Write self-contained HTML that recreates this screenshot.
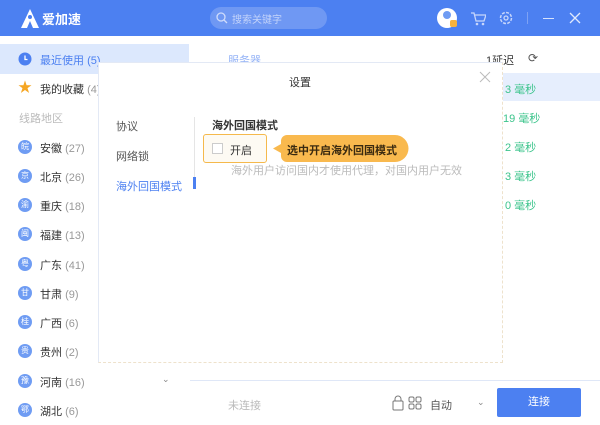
<!DOCTYPE html>
<html><head><meta charset="utf-8"><style>
*{margin:0;padding:0;box-sizing:border-box}
body{width:600px;height:425px;overflow:hidden;background:#fff;font-family:"Liberation Sans","Noto Sans CJK SC",sans-serif;font-size:11px;color:#333;position:relative}
.a{position:absolute;white-space:nowrap}
.hdr{left:0;top:0;width:600px;height:36px;background:#4c80f1}
.ic{width:14px;height:14px;border-radius:50%;background:#6f9cf3;color:#fff;font-size:8px;text-align:center;line-height:14px}
.g{color:#999}
.ms{color:#3cc48c}
</style></head><body>
<div class="a hdr"></div>
<svg class="a" style="left:19px;top:8px" width="22" height="22" viewBox="0 0 22 22"><path d="M11 1 L20 20 L14 20 L11 13 L8 20 L2 20 Z" fill="#fff"/><circle cx="11" cy="9" r="2" fill="#4c80f1"/></svg>
<div class="a" style="left:42px;top:9px;color:#fff;font-size:13px;font-weight:bold">爱加速</div>
<div class="a" style="left:210px;top:7px;width:117px;height:22px;border-radius:11px;background:#6f98f3"></div>
<svg class="a" style="left:216px;top:12px" width="12" height="12"><circle cx="5" cy="5" r="4" stroke="#cfdcfb" fill="none" stroke-width="1.3"/><path d="M8 8l3 3" stroke="#cfdcfb" stroke-width="1.3"/></svg>
<div class="a" style="left:232px;top:11px;color:#c3d3fa;font-size:10px">搜索关键字</div>
<div class="a" style="left:437px;top:8px;width:20px;height:20px;border-radius:50%;background:#fff"></div>
<div class="a" style="left:443px;top:11px;width:8px;height:8px;border-radius:50%;background:#6f9cf3"></div>
<div class="a" style="left:450px;top:20px;width:7px;height:7px;border-radius:2px;background:#f6b23c"></div>
<svg class="a" style="left:470px;top:11px" width="16" height="16"><path d="M1 2h3l2 8h8l2-6H5" stroke="#c7d6fb" fill="none" stroke-width="1.3"/><circle cx="7" cy="13" r="1.3" fill="#c7d6fb"/><circle cx="13" cy="13" r="1.3" fill="#c7d6fb"/></svg>
<svg class="a" style="left:498px;top:10px" width="16" height="16"><circle cx="8" cy="8" r="5.5" stroke="#c7d6fb" fill="none" stroke-width="1.5" stroke-dasharray="3 1.3"/><circle cx="8" cy="8" r="2" stroke="#c7d6fb" fill="none" stroke-width="1.3"/></svg>
<div class="a" style="left:527px;top:12px;width:1px;height:12px;background:#7ea2f4"></div>
<div class="a" style="left:543px;top:18px;width:11px;height:1px;background:#d6e2fc"></div>
<svg class="a" style="left:569px;top:12px" width="12" height="12"><path d="M1 1l10 10M11 1L1 11" stroke="#e0e9fd" stroke-width="1.3"/></svg>

<div class="a" style="left:0;top:44px;width:189px;height:30px;background:#dce8fd"></div>
<svg class="a" style="left:18px;top:52px" width="14" height="14"><circle cx="7" cy="7" r="6.5" fill="#4c80f1"/><path d="M7 3.5V7.5h2.5" stroke="#fff" fill="none" stroke-width="1.3"/></svg>
<div class="a" style="left:40px;top:52px;color:#4c80f1">最近使用 <span>(5)</span></div>
<div class="a" style="left:18px;top:80px;color:#f5a623;font-size:14px;line-height:14px">★</div>
<div class="a" style="left:40px;top:81px">我的收藏 <span class="g">(4)</span></div>
<div class="a" style="left:19px;top:110px;color:#bbb">线路地区</div>
<div class="a ic" style="left:18px;top:140px">皖</div><div class="a" style="left:40px;top:140px">安徽 <span class="g">(27)</span></div>
<div class="a ic" style="left:18px;top:169px">京</div><div class="a" style="left:40px;top:169px">北京 <span class="g">(26)</span></div>
<div class="a ic" style="left:18px;top:198px">渝</div><div class="a" style="left:40px;top:198px">重庆 <span class="g">(18)</span></div>
<div class="a ic" style="left:18px;top:227px">闽</div><div class="a" style="left:40px;top:227px">福建 <span class="g">(13)</span></div>
<div class="a ic" style="left:18px;top:257px">粤</div><div class="a" style="left:40px;top:257px">广东 <span class="g">(41)</span></div>
<div class="a ic" style="left:18px;top:286px">甘</div><div class="a" style="left:40px;top:286px">甘肃 <span class="g">(9)</span></div>
<div class="a ic" style="left:18px;top:315px">桂</div><div class="a" style="left:40px;top:315px">广西 <span class="g">(6)</span></div>
<div class="a ic" style="left:18px;top:344px">贵</div><div class="a" style="left:40px;top:344px">贵州 <span class="g">(2)</span></div>
<div class="a ic" style="left:18px;top:374px">豫</div><div class="a" style="left:40px;top:374px">河南 <span class="g">(16)</span></div>
<div class="a ic" style="left:18px;top:403px">鄂</div><div class="a" style="left:40px;top:403px">湖北 <span class="g">(6)</span></div>
<div class="a" style="left:162px;top:374px;color:#888;font-size:9px">⌄</div>

<div class="a" style="left:228px;top:52px;color:#4c80f1;opacity:.6">服务器</div>
<div class="a" style="left:486px;top:52px">1延迟</div>
<div class="a" style="left:528px;top:51px;color:#555;font-size:12px">⟳</div>
<div class="a" style="left:503px;top:73px;width:97px;height:28px;background:#e6eefd"></div>
<div class="a ms" style="left:505px;top:81px">3 毫秒</div>
<div class="a ms" style="left:503px;top:110px">19 毫秒</div>
<div class="a ms" style="left:505px;top:139px">2 毫秒</div>
<div class="a ms" style="left:505px;top:168px">3 毫秒</div>
<div class="a ms" style="left:505px;top:197px">0 毫秒</div>

<div class="a" style="left:190px;top:380px;width:410px;height:1px;background:#dfe7f7"></div>
<div class="a" style="left:228px;top:397px;color:#bbb">未连接</div>
<svg class="a" style="left:392px;top:395px" width="36" height="16"><rect x="1" y="6" width="10" height="9" rx="1" stroke="#777" fill="none"/><path d="M3 6V4a3 3 0 0 1 6 0v2" stroke="#777" fill="none"/><rect x="17" y="2" width="5" height="5" rx="1.5" stroke="#777" fill="none"/><rect x="24" y="2" width="5" height="5" rx="1.5" stroke="#777" fill="none"/><rect x="17" y="9" width="5" height="5" rx="1.5" stroke="#777" fill="none"/><rect x="24" y="9" width="5" height="5" rx="1.5" stroke="#777" fill="none"/></svg>
<div class="a" style="left:430px;top:397px;color:#555">自动</div>
<div class="a" style="left:477px;top:397px;color:#888;font-size:9px">⌄</div>
<div class="a" style="left:497px;top:388px;width:84px;height:29px;background:#4c80f1;border-radius:2px;color:#fff;text-align:center;line-height:29px">连接</div>

<div class="a" style="left:98px;top:62px;width:405px;height:301px;background:#fff;border:1px solid #e3e9f5;border-right:1px dashed #eee2cc;border-bottom:1px dashed #eee2cc"></div>
<div class="a" style="left:289px;top:74px;font-size:11px">设置</div>
<svg class="a" style="left:479px;top:71px" width="12" height="12"><path d="M1 1l10 10M11 1L1 11" stroke="#bbb" stroke-width="1"/></svg>
<div class="a" style="left:116px;top:118px;color:#555">协议</div>
<div class="a" style="left:116px;top:148px;color:#555">网络锁</div>
<div class="a" style="left:116px;top:178px;color:#4c80f1">海外回国模式</div>
<div class="a" style="left:194px;top:117px;width:1px;height:72px;background:#e5e5e5"></div>
<div class="a" style="left:193px;top:177px;width:3px;height:12px;background:#4c80f1"></div>
<div class="a" style="left:212px;top:117px;font-weight:bold;color:#333">海外回国模式</div>
<div class="a" style="left:203px;top:134px;width:64px;height:29px;border:1px solid #f5b94c;border-radius:3px;background:#fdfaf3"></div>
<div class="a" style="left:212px;top:143px;width:11px;height:11px;border:1px solid #ccc;background:#fff"></div>
<div class="a" style="left:230px;top:142px">开启</div>
<svg class="a" style="left:271px;top:135px" width="140" height="27"><path d="M16 0H124a13.5 13.5 0 0 1 0 27H16a6 6 0 0 1-6-6V18L2 13.5L10 9V6a6 6 0 0 1 6-6Z" fill="#f9b94e"/></svg>
<div class="a" style="left:287px;top:142px;font-weight:bold;color:#3a2a10">选中开启海外回国模式</div>
<div class="a" style="left:231px;top:162px;color:#bbb">海外用户访问国内才使用代理，对国内用户无效</div>
</body></html>
